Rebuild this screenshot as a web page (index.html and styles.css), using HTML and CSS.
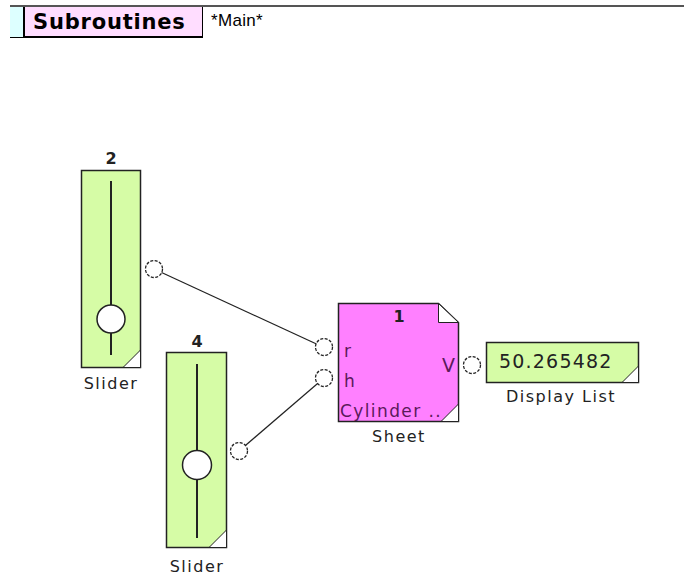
FILE: index.html
```html
<!DOCTYPE html>
<html lang="en">
<head>
  <meta charset="UTF-8" />
  <title>Subroutines</title>
  <link rel="stylesheet" href="styles.css">
</head>
<body>
  <div class="tabbar">
    <div class="tab-stub"></div>
    <div class="tab tab-active">Subroutines</div>
    <div class="tab tab-main">*Main*</div>
  </div>

  <svg class="canvas" width="684" height="537" viewBox="0 40 684 537">
    <!-- wires -->
    <line class="wire" x1="154" y1="271" x2="323" y2="349" />
    <line class="wire" x1="239" y1="453" x2="324" y2="380" />

    <!-- Slider 2 -->
    <text class="node-num" x="111" y="166">2</text>
    <rect class="slider" x="81.5" y="172.5" width="59" height="197" />
    <line class="track" x1="111" y1="183" x2="111" y2="357" />
    <circle class="knob" cx="111" cy="321" r="14" />
    <polygon class="corner" points="140.5,352 140.5,369.5 123,369.5" />
    <text class="label" x="111" y="391">Slider</text>
    <circle class="port" cx="154" cy="271" r="8.5" />

    <!-- Slider 4 -->
    <text class="node-num" x="197" y="349">4</text>
    <rect class="slider" x="166.5" y="354.5" width="60" height="195" />
    <line class="track" x1="197" y1="366" x2="197" y2="540" />
    <circle class="knob" cx="197" cy="467" r="14.5" />
    <polygon class="corner" points="226.5,532 226.5,549.5 209,549.5" />
    <text class="label" x="197" y="574">Slider</text>
    <circle class="port" cx="239" cy="453" r="8.5" />

    <!-- Sheet -->
    <polygon class="sheet" points="338.5,305.5 438.5,305.5 458.5,324.5 458.5,423.5 338.5,423.5" />
    <polygon class="corner" points="438.5,305.5 438.5,324.5 458.5,324.5" />
    <polygon class="corner" points="458.5,406 458.5,423.5 441,423.5" />
    <text class="node-num" x="399" y="324">1</text>
    <text class="pin" x="344" y="359">r</text>
    <text class="pin" x="344" y="389">h</text>
    <text class="pin pin-out" x="455" y="374">V</text>
    <text class="sheet-name" x="340" y="419">Cylinder ..</text>
    <text class="label" x="399" y="444">Sheet</text>
    <circle class="port" cx="324" cy="349" r="8.5" />
    <circle class="port" cx="324" cy="380" r="8.5" />
    <circle class="port" cx="472" cy="367" r="8.5" />

    <!-- Display -->
    <rect class="display" x="486.5" y="344.5" width="152" height="40" />
    <polygon class="corner" points="638.5,368 638.5,384.5 622,384.5" />
    <text class="display-value" x="499" y="370">50.265482</text>
    <text class="label" x="561" y="404">Display List</text>
  </svg>
</body>
</html>
```

FILE: styles.css
```css
body {
  margin: 0;
  background-color: white;
  font-family: "DejaVu Sans", Verdana, sans-serif;
}

.tabbar {
  display: flex;
  margin-left: 10px;
  height: 31px;
  margin-top: 5px;
  border-top: 2px solid #555;
}

.tab-stub {
  width: 13px;
  background-color: #ddffff;
  border-right: 2px solid black;
  border-bottom: 1px solid black;
}

.tab {
  display: flex;
  align-items: center;
  padding: 0 8px;
}

.tab-active {
  width: 161px;
  background-color: #ffddff;
  border-right: 1px solid black;
  border-bottom: 2px solid black;
  font-weight: bold;
  font-size: 21px;
  letter-spacing: 0.8px;
}

.tab-main {
  font-family: "Liberation Sans", Arial, sans-serif;
  font-size: 17px;
  letter-spacing: 0.3px;
  padding-bottom: 4px;
}

.canvas {
  display: block;
}

.wire {
  stroke: #222;
  stroke-width: 1.2;
}

.slider,
.display {
  fill: #d6fca6;
  stroke: #222;
  stroke-width: 1.5;
}

.sheet {
  fill: #ff80ff;
  stroke: #222;
  stroke-width: 1.5;
}

.track {
  stroke: #222;
  stroke-width: 2;
}

.knob {
  fill: white;
  stroke: #222;
  stroke-width: 1.5;
}

.corner {
  fill: white;
  stroke: #222;
  stroke-width: 1;
}

.port {
  fill: white;
  stroke: #222;
  stroke-width: 1.3;
  stroke-dasharray: 3 1.5;
}

.node-num {
  font-size: 16px;
  font-weight: bold;
  text-anchor: middle;
  fill: #222;
}

.label {
  font-size: 16px;
  letter-spacing: 1.5px;
  text-anchor: middle;
  fill: #222;
}

.pin {
  font-size: 17px;
  fill: #5a1a5a;
}

.pin-out {
  font-size: 19px;
  text-anchor: end;
}

.sheet-name {
  font-size: 17px;
  letter-spacing: 1.4px;
  fill: #5a1a5a;
}

.display-value {
  font-size: 19px;
  letter-spacing: 1.2px;
  fill: #222;
}
```
